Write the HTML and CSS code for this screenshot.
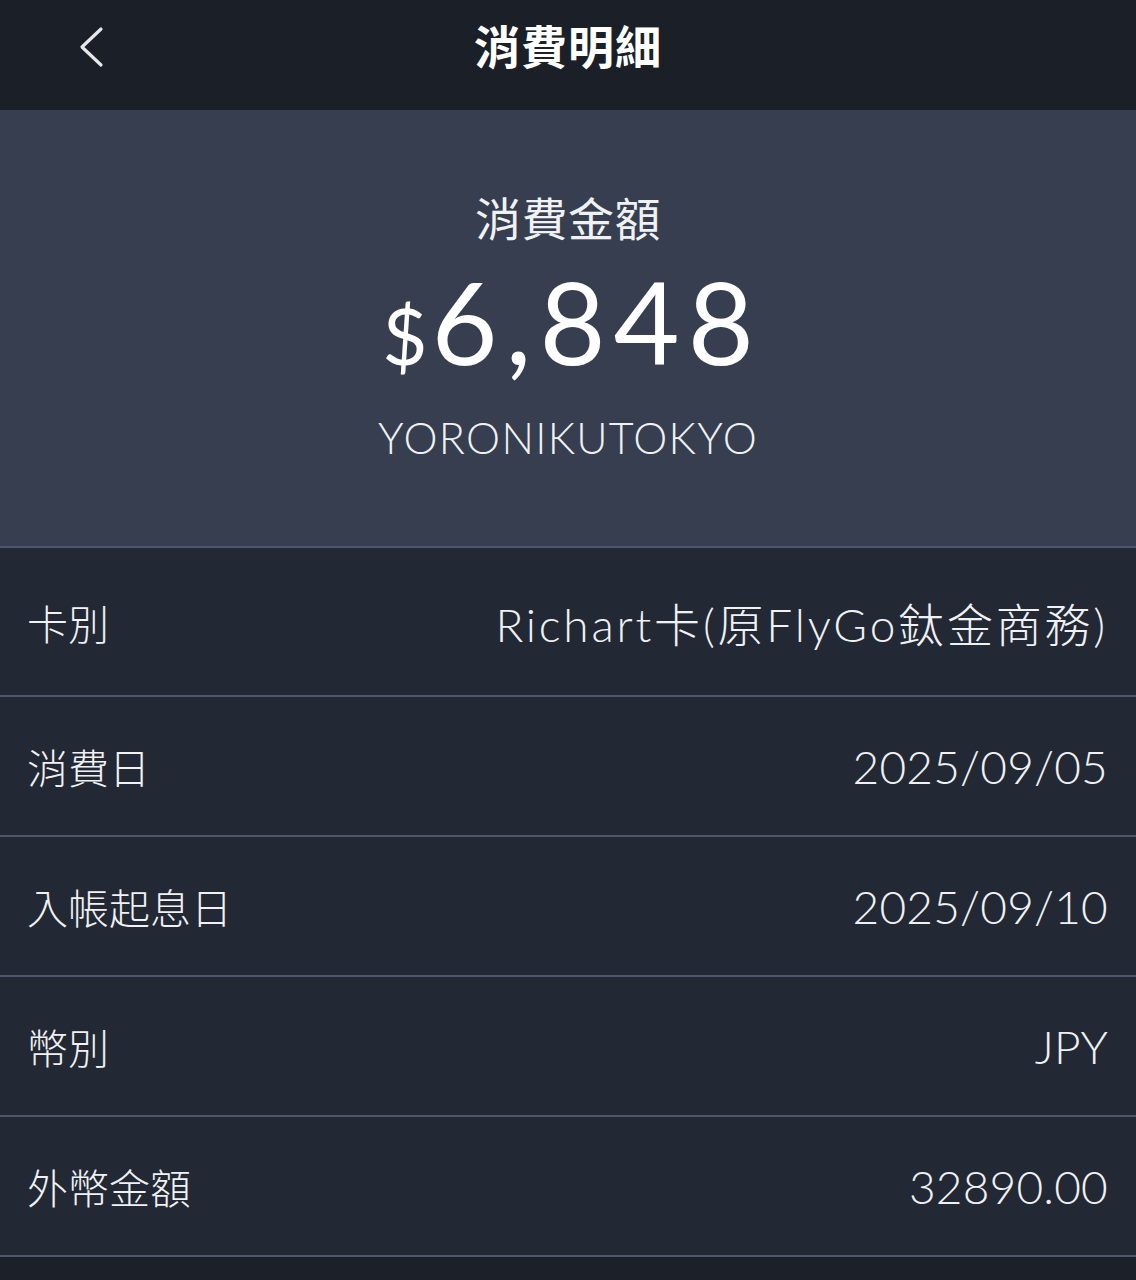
FILE: index.html
```html
<!DOCTYPE html>
<html lang="zh-Hant">
<head>
    <meta charset="UTF-8">
    <title>消費明細</title>
    <meta name="viewport" content="width=device-width, initial-scale=1.0">
    <link rel="stylesheet" href="styles.css">
</head>
<body>
    <!-- ヘッダー -->
    <header class="topbar">
        <a class="back" href="#" aria-label="返回">
            <svg width="30" height="42" viewBox="0 0 30 42">
                <path d="M24 3 L5 21 L24 39" fill="none" stroke="#e6e8ec" stroke-width="3.2" stroke-linecap="round" stroke-linejoin="round"/>
            </svg>
        </a>
        <h1>消費明細</h1>
    </header>

    <!-- 金額 -->
    <section class="hero">
        <p class="hero-label">消費金額</p>
        <p class="amount"><span class="currency">$</span>6,848</p>
        <p class="merchant">YORONIKUTOKYO</p>
    </section>

    <!-- 明細 -->
    <ul class="details">
        <li class="row first"><span class="label">卡別</span><span class="value wide">Richart卡(原FlyGo鈦金商務)</span></li>
        <li class="row"><span class="label">消費日</span><span class="value">2025/09/05</span></li>
        <li class="row"><span class="label">入帳起息日</span><span class="value">2025/09/10</span></li>
        <li class="row"><span class="label">幣別</span><span class="value">JPY</span></li>
        <li class="row"><span class="label">外幣金額</span><span class="value">32890.00</span></li>
    </ul>
</body>
</html>
```

FILE: styles.css
```css
/* リセット */
* {
    box-sizing: border-box;
    margin: 0;
    padding: 0;
}
body {
    font-family: Lato, "Noto Sans CJK TC", sans-serif;
    background-color: #1c2028;
    color: #f2f3f5;
    min-height: 1280px;
}
/* ヘッダー */
.topbar {
    height: 110px;
    background-color: #1b1f27;
    display: flex;
    align-items: center;
    justify-content: center;
    position: relative;
}
.back {
    position: absolute;
    left: 77px;
    top: 26px;
    display: block;
    width: 30px;
    height: 42px;
}
.topbar h1 {
    font-family: "Noto Sans CJK TC", sans-serif;
    font-size: 46px;
    font-weight: 700;
    color: #ffffff;
    margin-top: -22px;
    letter-spacing: 1px;
}
/* 金額エリア */
.hero {
    height: 438px;
    background-color: #363e50;
    border-bottom: 2px solid #4d566a;
    display: flex;
    flex-direction: column;
    align-items: center;
    padding-top: 80px;
}
.hero-label {
    font-family: "Noto Sans CJK TC", sans-serif;
    font-size: 46px;
    line-height: 52px;
    font-weight: 400;
    color: #f0f1f3;
    letter-spacing: 0.5px;
}
.amount {
    font-size: 114px;
    line-height: 130px;
    font-weight: 400;
    margin-top: 14px;
    color: #ffffff;
    letter-spacing: 8px;
    padding-left: 8px;
}
.currency {
    font-size: 78px;
    letter-spacing: 0;
    margin-right: 4px;
}
.merchant {
    font-size: 43px;
    line-height: 50px;
    font-weight: 300;
    margin-top: 13px;
    color: #f0f1f3;
    letter-spacing: 1.3px;
}
/* 明細リスト */
.details {
    list-style: none;
}
.row {
    height: 140px;
    background-color: #222834;
    border-bottom: 2px solid #4d566a;
    display: flex;
    align-items: center;
    justify-content: space-between;
    padding: 0 28px 0 27px;
    font-size: 42px;
    font-weight: 300;
    color: #f0f1f3;
}
.row.first {
    height: 149px;
}
.label {
    font-family: "Noto Sans CJK TC", sans-serif;
    font-weight: 300;
    font-size: 41px;
}
.value {
    font-size: 46px;
    letter-spacing: 0.2px;
}
.value.wide {
    letter-spacing: 2.8px;
}
```
